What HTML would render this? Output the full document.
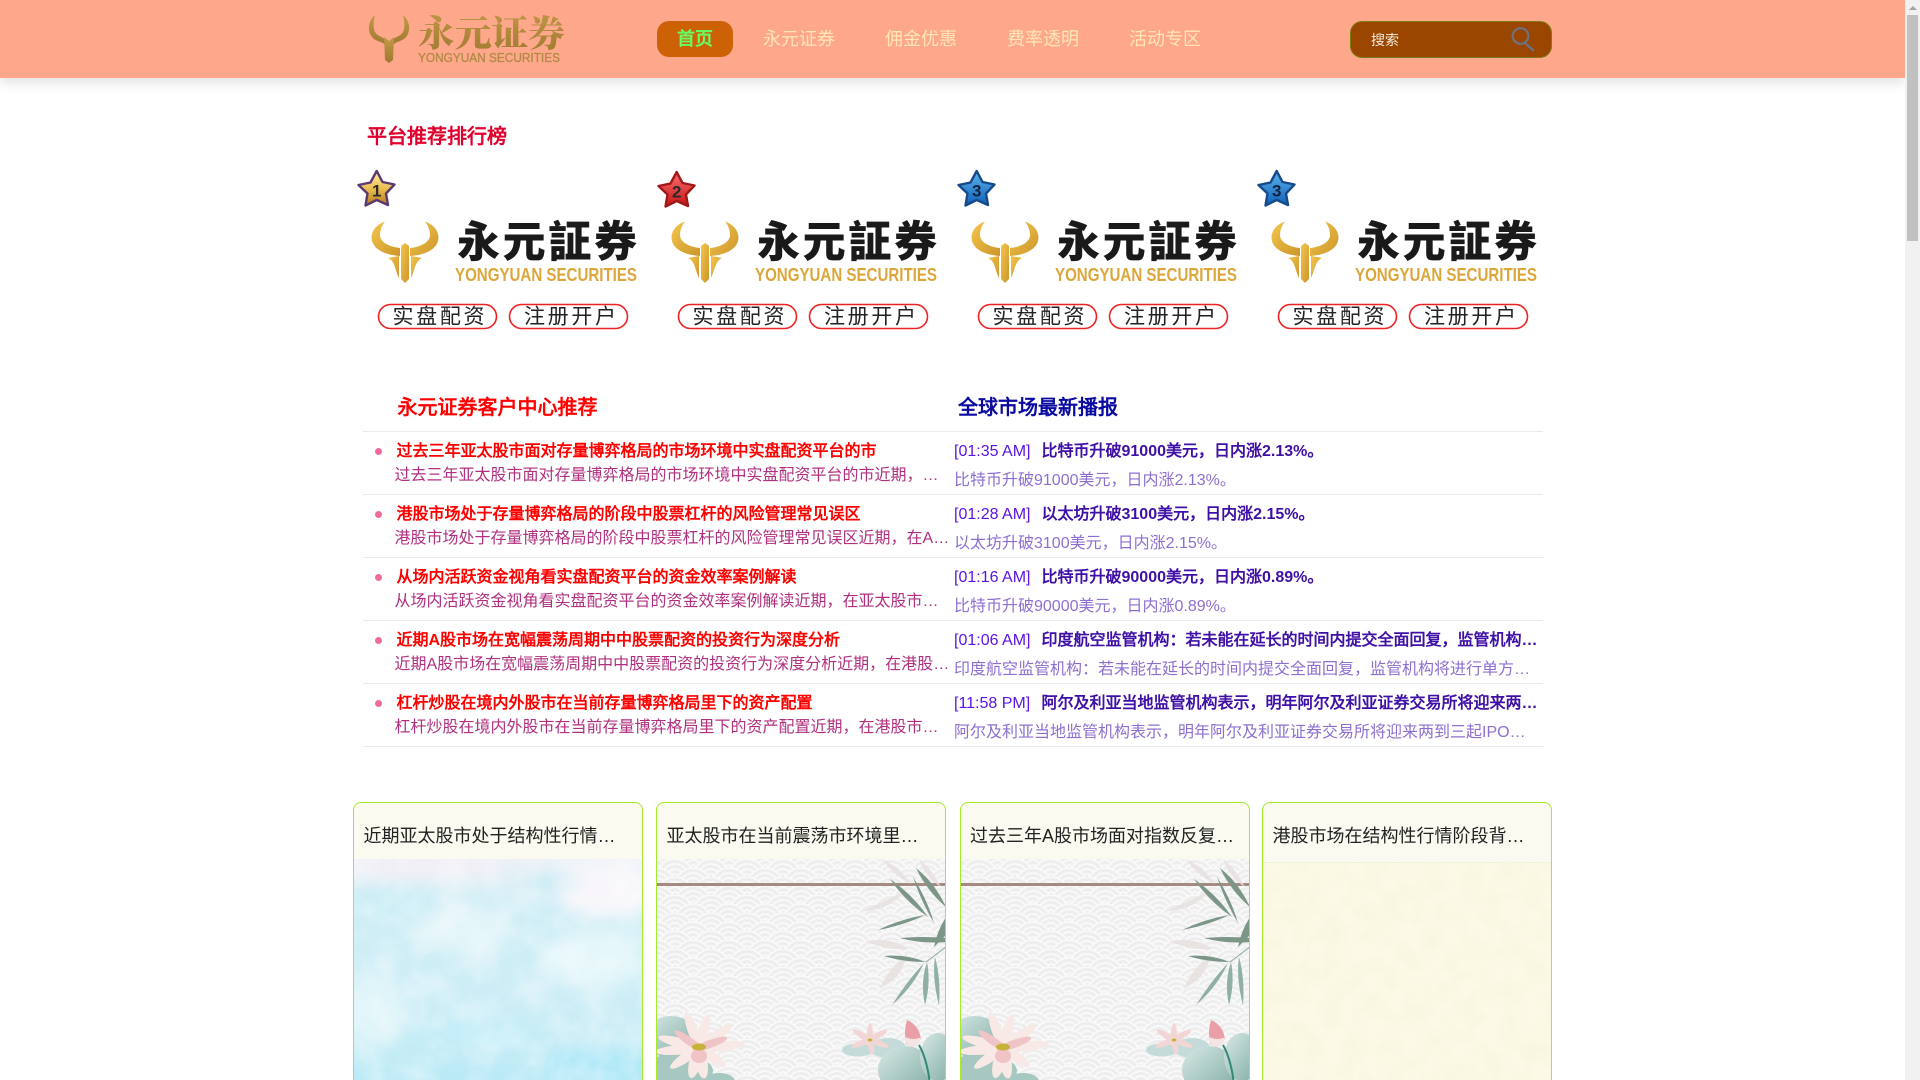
<!DOCTYPE html>
<html><head><meta charset="utf-8"><title>永元证券</title>
<style>
*{box-sizing:border-box}
html,body{margin:0;padding:0;width:1920px;height:1080px;overflow:hidden;background:#fff;font-family:"Liberation Sans",sans-serif}
#wrap{position:absolute;left:0;top:0;width:1920px;height:1080px;overflow:hidden;background:#fff}
.a{position:absolute;white-space:nowrap}
#hd{position:absolute;left:0;top:0;width:1905px;height:78px;background:#ffa78a;box-shadow:0 4px 12px rgba(0,0,0,.13)}
.nav{position:absolute;top:21px;height:36px;line-height:36px;font-size:18px;color:#ffe6b8}
.row{position:absolute;left:363px;width:1180px;height:63px;border-top:1px solid #eaeaea}
.row.end{height:1px}
.dot{position:absolute;left:12px;top:16px;width:7px;height:7px;border-radius:50%;background:#f06a9e}
.t1,.s1,.tm,.t2,.s2{position:absolute;font-size:16px;line-height:22px;white-space:nowrap;overflow:hidden;text-overflow:ellipsis}
.t1{left:33.5px;top:8.5px;width:555px;color:#f00;font-weight:bold}
.s1{left:31.5px;top:32.5px;width:555px;color:#b0307f}
.tm{left:591px;top:8.5px;color:#5a14e6}
.t2{left:678.5px;top:8.5px;width:498px;color:#3f10a6;font-weight:bold}
.s2{left:591px;top:37.5px;width:584px;color:#8d6fd0}
.card{position:absolute;top:802px;width:290px;height:300px;border:1px solid #a6ea2c;border-radius:8px;background:#fafaf0;overflow:hidden}
.card .ct{position:absolute;left:9.5px;top:22px;font-size:18px;line-height:22px;color:#222;white-space:nowrap}
.card svg{position:absolute;left:0;top:56px}
.rk{position:absolute;top:165px;width:300px;height:170px}
.sb{position:absolute;left:1905px;top:0;width:15px;height:1080px;background:#f1f1f1}
</style></head><body><div id="wrap">
<svg width="0" height="0" style="position:absolute">
<defs>
<linearGradient id="gb" x1="0" y1="0" x2="1" y2="1"><stop offset="0" stop-color="#f3c54c"/><stop offset="1" stop-color="#cd962b"/></linearGradient>
<linearGradient id="gs1" x1="0" y1="0" x2="0" y2="1"><stop offset="0" stop-color="#fff2a8"/><stop offset=".55" stop-color="#e8b94c"/><stop offset="1" stop-color="#b5781a"/></linearGradient>
<linearGradient id="gs2" x1="0" y1="0" x2="0" y2="1"><stop offset="0" stop-color="#f87070"/><stop offset="1" stop-color="#c81414"/></linearGradient>
<linearGradient id="gs3" x1="0" y1="0" x2="0" y2="1"><stop offset="0" stop-color="#5eb4ee"/><stop offset="1" stop-color="#0f60b8"/></linearGradient>
<linearGradient id="hg" x1="0" y1="0" x2="0" y2="1"><stop offset="0" stop-color="#c29a48"/><stop offset="1" stop-color="#a07830"/></linearGradient>
<linearGradient id="lf2" x1="0" y1="0" x2="1" y2="1"><stop offset="0" stop-color="#d8e8e5"/><stop offset="1" stop-color="#7faca3"/></linearGradient>
<linearGradient id="sky" x1="0" y1="0" x2="0" y2="1"><stop offset="0" stop-color="#ecf1f7"/><stop offset=".2" stop-color="#d0eef6"/><stop offset=".7" stop-color="#ccedf6"/><stop offset="1" stop-color="#b0e8f6"/></linearGradient>
<filter id="bl"><feGaussianBlur stdDeviation="8"/></filter>
<filter id="mot" x="0" y="0" width="100%" height="100%"><feTurbulence type="fractalNoise" baseFrequency=".035" numOctaves="3" seed="4"/><feColorMatrix values="0 0 0 0 1  0 0 0 0 1  0 0 0 0 1  1.6 0 0 0 -.55"/></filter>
<filter id="flo" x="0" y="0" width="100%" height="100%"><feTurbulence type="fractalNoise" baseFrequency=".05" numOctaves="3" seed="9"/><feColorMatrix values="0 0 0 0 .93  0 0 0 0 .92  0 0 0 0 .74  1.8 0 0 0 -.6"/></filter>
<pattern id="sei" width="36" height="18" patternUnits="userSpaceOnUse">
<rect width="36" height="18" fill="#efeeee"/>
<g fill="#efeeee" stroke="#f9f9f9" stroke-width="2">
<g transform="translate(18,0)"><circle r="18"/><circle r="13"/><circle r="8"/><circle r="3"/></g>
<g transform="translate(0,9)"><circle r="18"/><circle r="13"/><circle r="8"/><circle r="3"/></g>
<g transform="translate(36,9)"><circle r="18"/><circle r="13"/><circle r="8"/><circle r="3"/></g>
<g transform="translate(18,18)"><circle r="18"/><circle r="13"/><circle r="8"/><circle r="3"/></g>
<g transform="translate(0,27)"><circle r="18"/><circle r="13"/><circle r="8"/><circle r="3"/></g>
<g transform="translate(36,27)"><circle r="18"/><circle r="13"/><circle r="8"/><circle r="3"/></g>
</g></pattern>
<g id="bull">
<path d="M30,56.5C20,60 15,68 17,76C20,86 32,90 45,91L45,83C34,82 25,77 25,70C25,65 27,60 30,56.5Z" fill="url(#gb)"/>
<path d="M70,56.5C80,60 85,68 83,76C80,86 68,90 55,91L55,83C66,82 75,77 75,70C75,65 73,60 70,56.5Z" fill="url(#gb)"/>
<path d="M50,78L54,81L54,114L50,118L46,114L46,81Z" fill="url(#gb)"/>
<path d="M33,93L44,91L44,113C40,105 40,96 33,93Z" fill="url(#gb)"/>
<path d="M67,93L56,91L56,113C60,105 60,96 67,93Z" fill="url(#gb)"/>
</g>
<g id="star"><polygon points="21.7,6 27.5,17 39.5,19.5 31,28.5 33,40 21.7,35 10.5,40.5 12.5,28.5 3.5,20 15.5,17.5" stroke-width="2.4" stroke-linejoin="round"/></g>
<g id="lotusArt">
<rect width="290" height="230" fill="url(#sei)"/>
<rect y="24" width="290" height="3" fill="#a58a82"/>
<g fill="#e7e0df" opacity=".8">
<path d="M225,0Q245,10 254,25Q235,15 225,0Z"/><path d="M205,52Q228,42 248,32Q232,52 205,52Z"/><path d="M208,82Q235,78 252,90Q230,92 208,82Z"/><path d="M222,130Q235,105 250,95Q245,120 222,130Z"/><path d="M262,0Q275,10 284,28Q268,18 262,0Z"/>
</g>
<g fill="#7c9688">
<path d="M259,9Q278,24 289,48Q270,32 259,9Z"/>
<path d="M233,20Q256,36 271,58Q248,42 233,20Z"/>
<path d="M256,18Q270,40 277,64Q264,42 256,18Z"/>
<path d="M221,71Q244,60 268,56Q248,66 221,71Z"/>
<path d="M277,88Q280,72 289,58L289,76Z"/>
<path d="M243,79Q266,77 289,79L289,83Q264,85 243,79Z"/>
<path d="M227,97Q250,95 269,103Q246,103 227,97Z"/>
</g>
<g fill="#8fb0a4">
<path d="M235,146Q250,122 267,104Q256,128 235,146Z"/>
<path d="M268,146Q263,124 270,103Q274,124 268,146Z"/>
<path d="M282,146Q275,120 278,98Q284,120 282,146Z"/>
</g>
<path d="M289,88L269,103" stroke="#8aa99c" fill="none"/>
<ellipse cx="14" cy="178" rx="26" ry="21" fill="url(#lf2)"/>
<ellipse cx="20" cy="212" rx="36" ry="17" fill="#a7c8c1"/>
<ellipse cx="62" cy="222" rx="16" ry="8" fill="#a7c8c1"/>
<g transform="translate(42,189)">
<g fill="#f8e8e6">
<ellipse rx="5" ry="22" transform="rotate(-20) translate(0,-16)"/><ellipse rx="5" ry="20" transform="rotate(15) translate(0,-15)"/><ellipse rx="5" ry="22" transform="rotate(55) translate(0,-18)"/><ellipse rx="5" ry="26" transform="rotate(85) translate(0,-20)"/><ellipse rx="5" ry="24" transform="rotate(-75) translate(0,-18)"/><ellipse rx="5" ry="26" transform="rotate(-95) translate(0,-18)"/><ellipse rx="5" ry="20" transform="rotate(-125) translate(0,-15)"/><ellipse rx="5" ry="18" transform="rotate(125) translate(0,-14)"/><ellipse rx="6" ry="17" transform="rotate(170) translate(0,-14)"/><ellipse rx="6" ry="17" transform="rotate(-165) translate(0,-14)"/>
</g>
<g fill="#eec4c6"><ellipse rx="4" ry="18" transform="rotate(-55) translate(0,-12)"/><ellipse rx="4" ry="18" transform="rotate(70) translate(0,-12)"/><ellipse cy="8" rx="8" ry="7"/></g>
<ellipse rx="7" ry="3.5" cy="-1" fill="#c9b23a"/>
</g>
<ellipse cx="201" cy="191" rx="16" ry="6.5" fill="#c4dcd9"/>
<ellipse cx="231" cy="189" rx="18" ry="10" fill="#c4dcd9"/>
<g transform="translate(213,181)" fill="#f2d6d6">
<ellipse rx="3" ry="11" transform="translate(0,-6)"/><ellipse rx="3" ry="12" transform="rotate(60) translate(0,-8)"/><ellipse rx="3" ry="12" transform="rotate(-60) translate(0,-8)"/><ellipse rx="3" ry="12" transform="rotate(110) translate(0,-8)"/><ellipse rx="3" ry="12" transform="rotate(-110) translate(0,-8)"/><ellipse rx="3" ry="9" transform="rotate(170) translate(0,-6)"/>
<ellipse rx="2.5" ry="1.5" fill="#c9b23a"/>
</g>
<path d="M250,161Q262,166 264,180Q258,188 250,186Q246,174 250,161Z" fill="#e99fa8"/>
<path d="M248,178Q258,182 264,178Q262,188 254,189Q249,186 248,178Z" fill="#f4e4e4"/>
<ellipse cx="248" cy="211" rx="27" ry="24" fill="url(#lf2)"/>
<ellipse cx="281" cy="198" rx="18" ry="24" fill="url(#lf2)"/>
<path d="M262,186Q270,200 273,225" stroke="#2e8b78" stroke-width="2" fill="none"/>
</g>
</defs></svg>

<div id="hd"></div>
<svg class="a" style="left:368px;top:15px" width="200" height="50">
<path d="M7,0C0,6 -1,16 4,22C8,27 14,26 17,30L17,24C12,21 7,20 6,14C5,9 6,5 7,0Z" fill="url(#hg)"/>
<path d="M35,0C42,6 43,16 38,22C34,27 28,26 25,30L25,24C30,21 35,20 36,14C37,9 36,5 35,0Z" fill="url(#hg)"/>
<path d="M16,22L21,26L26,22L25,45L21,48L17,45Z" fill="url(#hg)"/>
<text x="50" y="31" font-size="36" font-weight="900" fill="url(#hg)" textLength="147" lengthAdjust="spacingAndGlyphs" font-family="'Noto Serif CJK SC',serif">永元证券</text>
<text x="50" y="47" font-size="13" fill="#b08a45" stroke="#b08a45" stroke-width=".3" textLength="142" lengthAdjust="spacingAndGlyphs" font-family="'Liberation Sans',sans-serif">YONGYUAN SECURITIES</text>
</svg>
<div class="a" style="left:657px;top:21px;width:76px;height:36px;background:#cc6205;border-radius:12px;color:#66ff66;font-weight:bold;font-size:18px;line-height:36px;text-align:center">首页</div>
<div class="nav" style="left:763px">永元证券</div>
<div class="nav" style="left:885px">佣金优惠</div>
<div class="nav" style="left:1007px">费率透明</div>
<div class="nav" style="left:1129px">活动专区</div>
<div class="a" style="left:1350px;top:21px;width:202px;height:37px;background:#9a4600;border:1px solid #7d7d10;border-radius:12px;color:#f2ead8;font-size:14px;line-height:37px;padding-left:20px">搜索</div>
<svg class="a" style="left:1509px;top:26px" width="28" height="27"><circle cx="11.5" cy="10" r="7.8" fill="none" stroke="#6b7280" stroke-width="2.2"/><path d="M16,17L25,25" stroke="#6b7280" stroke-width="2.2"/></svg>

<div class="a" style="left:367px;top:124px;font-size:20px;font-weight:bold;line-height:26px;color:#e0002d">平台推荐排行榜</div>

<div class="rk" style="left:355px"><svg width="300" height="170">
<use href="#star" fill="url(#gs1)" stroke="#5a3a70"/><text x="21.7" y="31.5" text-anchor="middle" font-size="17" font-weight="bold" fill="#2a2a2a" font-family="'Liberation Sans',sans-serif">1</text>
<use href="#bull"/>
<text x="102" y="92" font-size="43" font-weight="900" fill="#1a1a1a" textLength="180" font-family="'Noto Sans CJK TC',sans-serif">永元証券</text>
<text x="100" y="116" font-size="18" font-weight="bold" fill="#dba63a" textLength="182" lengthAdjust="spacingAndGlyphs" font-family="'Liberation Sans',sans-serif">YONGYUAN SECURITIES</text>
<rect x="23.5" y="139.5" width="118" height="24" rx="12" fill="#fff" stroke="#ee2222" stroke-width="1.6"/><rect x="154.5" y="139.5" width="118" height="24" rx="12" fill="#fff" stroke="#ee2222" stroke-width="1.6"/>
<text x="37.5" y="158.5" font-size="21" fill="#222" textLength="92" font-family="'Noto Sans CJK SC',sans-serif">实盘配资</text>
<text x="169" y="158.5" font-size="21" fill="#222" textLength="92" font-family="'Noto Sans CJK SC',sans-serif">注册开户</text>
</svg></div>
<div class="rk" style="left:655px"><svg width="300" height="170">
<g transform="translate(0,1)"><use href="#star" fill="url(#gs2)" stroke="#a01818"/><text x="21.7" y="31.5" text-anchor="middle" font-size="17" font-weight="bold" fill="#2a2a2a" font-family="'Liberation Sans',sans-serif">2</text></g>
<use href="#bull"/>
<text x="102" y="92" font-size="43" font-weight="900" fill="#1a1a1a" textLength="180" font-family="'Noto Sans CJK TC',sans-serif">永元証券</text>
<text x="100" y="116" font-size="18" font-weight="bold" fill="#dba63a" textLength="182" lengthAdjust="spacingAndGlyphs" font-family="'Liberation Sans',sans-serif">YONGYUAN SECURITIES</text>
<rect x="23.5" y="139.5" width="118" height="24" rx="12" fill="#fff" stroke="#ee2222" stroke-width="1.6"/><rect x="154.5" y="139.5" width="118" height="24" rx="12" fill="#fff" stroke="#ee2222" stroke-width="1.6"/>
<text x="37.5" y="158.5" font-size="21" fill="#222" textLength="92" font-family="'Noto Sans CJK SC',sans-serif">实盘配资</text>
<text x="169" y="158.5" font-size="21" fill="#222" textLength="92" font-family="'Noto Sans CJK SC',sans-serif">注册开户</text>
</svg></div>
<div class="rk" style="left:955px"><svg width="300" height="170">
<use href="#star" fill="url(#gs3)" stroke="#164a8a"/><text x="21.7" y="31.5" text-anchor="middle" font-size="17" font-weight="bold" fill="#12233f" font-family="'Liberation Sans',sans-serif">3</text>
<use href="#bull"/>
<text x="102" y="92" font-size="43" font-weight="900" fill="#1a1a1a" textLength="180" font-family="'Noto Sans CJK TC',sans-serif">永元証券</text>
<text x="100" y="116" font-size="18" font-weight="bold" fill="#dba63a" textLength="182" lengthAdjust="spacingAndGlyphs" font-family="'Liberation Sans',sans-serif">YONGYUAN SECURITIES</text>
<rect x="23.5" y="139.5" width="118" height="24" rx="12" fill="#fff" stroke="#ee2222" stroke-width="1.6"/><rect x="154.5" y="139.5" width="118" height="24" rx="12" fill="#fff" stroke="#ee2222" stroke-width="1.6"/>
<text x="37.5" y="158.5" font-size="21" fill="#222" textLength="92" font-family="'Noto Sans CJK SC',sans-serif">实盘配资</text>
<text x="169" y="158.5" font-size="21" fill="#222" textLength="92" font-family="'Noto Sans CJK SC',sans-serif">注册开户</text>
</svg></div>
<div class="rk" style="left:1255px"><svg width="300" height="170">
<use href="#star" fill="url(#gs3)" stroke="#164a8a"/><text x="21.7" y="31.5" text-anchor="middle" font-size="17" font-weight="bold" fill="#12233f" font-family="'Liberation Sans',sans-serif">3</text>
<use href="#bull"/>
<text x="102" y="92" font-size="43" font-weight="900" fill="#1a1a1a" textLength="180" font-family="'Noto Sans CJK TC',sans-serif">永元証券</text>
<text x="100" y="116" font-size="18" font-weight="bold" fill="#dba63a" textLength="182" lengthAdjust="spacingAndGlyphs" font-family="'Liberation Sans',sans-serif">YONGYUAN SECURITIES</text>
<rect x="23.5" y="139.5" width="118" height="24" rx="12" fill="#fff" stroke="#ee2222" stroke-width="1.6"/><rect x="154.5" y="139.5" width="118" height="24" rx="12" fill="#fff" stroke="#ee2222" stroke-width="1.6"/>
<text x="37.5" y="158.5" font-size="21" fill="#222" textLength="92" font-family="'Noto Sans CJK SC',sans-serif">实盘配资</text>
<text x="169" y="158.5" font-size="21" fill="#222" textLength="92" font-family="'Noto Sans CJK SC',sans-serif">注册开户</text>
</svg></div>

<div class="a" style="left:397.5px;top:395px;font-size:20px;font-weight:bold;line-height:26px;color:#f00">永元证券客户中心推荐</div>
<div class="a" style="left:958px;top:395px;font-size:20px;font-weight:bold;line-height:26px;color:#0a0aa0">全球市场最新播报</div>

<div class="row" style="top:431px"><i class="dot"></i>
<div class="t1">过去三年亚太股市面对存量博弈格局的市场环境中实盘配资平台的市</div>
<div class="s1">过去三年亚太股市面对存量博弈格局的市场环境中实盘配资平台的市近期，在亚太股市的行情中实盘配资平台</div>
<div class="tm">[01:35 AM]</div><div class="t2">比特币升破91000美元，日内涨2.13%。</div><div class="s2">比特币升破91000美元，日内涨2.13%。</div></div>
<div class="row" style="top:494px"><i class="dot"></i>
<div class="t1">港股市场处于存量博弈格局的阶段中股票杠杆的风险管理常见误区</div>
<div class="s1">港股市场处于存量博弈格局的阶段中股票杠杆的风险管理常见误区近期，在A股市场的行情中股票杠杆平台</div>
<div class="tm">[01:28 AM]</div><div class="t2">以太坊升破3100美元，日内涨2.15%。</div><div class="s2">以太坊升破3100美元，日内涨2.15%。</div></div>
<div class="row" style="top:557px"><i class="dot"></i>
<div class="t1">从场内活跃资金视角看实盘配资平台的资金效率案例解读</div>
<div class="s1">从场内活跃资金视角看实盘配资平台的资金效率案例解读近期，在亚太股市的行情中实盘配资平台的资金</div>
<div class="tm">[01:16 AM]</div><div class="t2">比特币升破90000美元，日内涨0.89%。</div><div class="s2">比特币升破90000美元，日内涨0.89%。</div></div>
<div class="row" style="top:620px"><i class="dot"></i>
<div class="t1">近期A股市场在宽幅震荡周期中中股票配资的投资行为深度分析</div>
<div class="s1">近期A股市场在宽幅震荡周期中中股票配资的投资行为深度分析近期，在港股市场的行情中股票配资平台的</div>
<div class="tm">[01:06 AM]</div><div class="t2">印度航空监管机构：若未能在延长的时间内提交全面回复，监管机构将进行单方面决定</div><div class="s2">印度航空监管机构：若未能在延长的时间内提交全面回复，监管机构将进行单方面决定并采取进一步措施</div></div>
<div class="row" style="top:683px"><i class="dot"></i>
<div class="t1">杠杆炒股在境内外股市在当前存量博弈格局里下的资产配置</div>
<div class="s1">杠杆炒股在境内外股市在当前存量博弈格局里下的资产配置近期，在港股市场的行情中杠杆炒股平台的资产</div>
<div class="tm">[11:58 PM]</div><div class="t2">阿尔及利亚当地监管机构表示，明年阿尔及利亚证券交易所将迎来两到三起IPO</div><div class="s2">阿尔及利亚当地监管机构表示，明年阿尔及利亚证券交易所将迎来两到三起IPO，市场规模有望继续扩大</div></div>
<div class="row end" style="top:745.5px"></div>

<div class="card" style="left:353px"><div class="ct">近期亚太股市处于结构性行情…</div>
<svg width="288" height="244"><rect width="288" height="244" fill="url(#sky)"/>
<g filter="url(#bl)"><ellipse cx="70" cy="6" rx="80" ry="12" fill="#f3eff6"/><ellipse cx="255" cy="30" rx="55" ry="28" fill="#f8f6fa"/><ellipse cx="40" cy="40" rx="45" ry="10" fill="#c8edf5"/><ellipse cx="200" cy="25" rx="25" ry="8" fill="#c8ecf4"/><ellipse cx="110" cy="70" rx="50" ry="22" fill="#e4f5f9"/><ellipse cx="240" cy="100" rx="50" ry="30" fill="#e4f6fa"/><ellipse cx="20" cy="150" rx="30" ry="40" fill="#e0f5f9"/><ellipse cx="120" cy="175" rx="70" ry="14" fill="#c2edf8"/><ellipse cx="240" cy="205" rx="60" ry="14" fill="#aee8f7"/></g>
<rect width="288" height="244" filter="url(#mot)" opacity=".45"/>
</svg></div>

<div class="card" style="left:656px"><div class="ct">亚太股市在当前震荡市环境里…</div>
<svg width="288" height="244"><use href="#lotusArt"/></svg></div>

<div class="card" style="left:959.5px"><div class="ct">过去三年A股市场面对指数反复…</div>
<svg width="288" height="244"><use href="#lotusArt"/></svg></div>

<div class="card" style="left:1262px"><div class="ct">港股市场在结构性行情阶段背…</div>
<svg width="288" height="244" style="top:59px"><rect width="288" height="244" fill="#fbfae6"/><path d="M0,0H288" stroke="#eeeed0" stroke-width="1.5"/>
<rect width="288" height="244" filter="url(#flo)"/>
</svg></div>

<div class="sb"><div style="position:absolute;left:3.5px;top:5.5px;border-left:4px solid transparent;border-right:4px solid transparent;border-bottom:4.5px solid #a3a3a3"></div><div style="position:absolute;left:2px;top:15px;width:11px;height:226px;background:#c1c1c1"></div></div>
</div></body></html>
